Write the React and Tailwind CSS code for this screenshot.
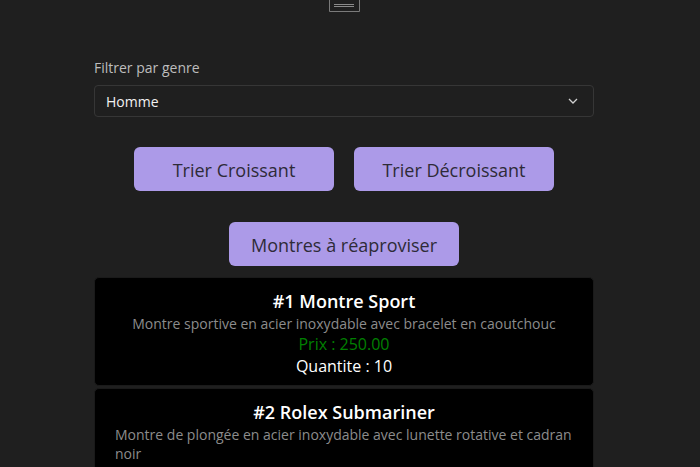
const montres = [
  {
    id: 1,
    nom: "Montre Sport",
    description: "Montre sportive en acier inoxydable avec bracelet en caoutchouc",
    prix: "250.00",
    quantite: 10,
  },
  {
    id: 2,
    nom: "Rolex Submariner",
    description:
      "Montre de plongée en acier inoxydable avec lunette rotative et cadran noir",
    prix: "8500.00",
    quantite: 3,
  },
];

const App = () => {
  return (
    <div
      className="min-h-[467px] bg-[#1f1f1f] text-white overflow-hidden"
      style={{ fontFamily: '"Open Sans", "Liberation Sans", sans-serif' }}
    >
      <div className="w-[688px] flex flex-col items-center">
        <svg width="31" height="12" viewBox="0 0 31 12" className="block">
          <path d="M0.5 0 V11.5 H30.5 V0" fill="none" stroke="#7a7a7a" strokeWidth="1" />
          <line x1="5" y1="4.5" x2="25" y2="4.5" stroke="#8a8a8a" strokeWidth="1" />
          <line x1="5" y1="6.5" x2="25" y2="6.5" stroke="#8a8a8a" strokeWidth="1" />
        </svg>

        <div className="w-[500px] mt-[46px]">
          <label className="block text-[14px] leading-[20px] text-[#bdbdbd]">
            Filtrer par genre
          </label>
          <div className="mt-[7px] h-[32px] rounded-[4px] border border-[#363636] flex items-center justify-between px-[11px]">
            <span className="text-[14px] text-[#f2f2f2]">Homme</span>
            <svg width="10" height="6" viewBox="0 0 10 6" className="mr-[4px]">
              <path d="M1 1 L5 5 L9 1" fill="none" stroke="#d0d0d0" strokeWidth="1.3" />
            </svg>
          </div>

          <div className="mt-[30px] flex justify-center gap-[20px]">
            <button className="w-[200px] h-[44px] pt-[2px] rounded-[6px] bg-[#ac9ae8] text-[18px] text-[#2e2b38]">
              Trier Croissant
            </button>
            <button className="w-[200px] h-[44px] pt-[2px] rounded-[6px] bg-[#ac9ae8] text-[18px] text-[#2e2b38]">
              Trier Décroissant
            </button>
          </div>

          <div className="mt-[31px] flex justify-center">
            <button className="w-[230px] h-[44px] pt-[2px] rounded-[6px] bg-[#ac9ae8] text-[18px] text-[#2e2b38]">
              Montres à réaproviser
            </button>
          </div>

          <div className="mt-[11px] flex flex-col gap-[2px]">
            {montres.map((m) => (
              <div
                key={m.id}
                className="bg-black border border-[#1a1a1a] rounded-[5px] px-[20px] pt-[10px] pb-[7px] flex flex-col items-center"
              >
                <h3 className="text-[18px] leading-[26px] font-semibold text-white">
                  #{m.id} {m.nom}
                </h3>
                <p className="text-[14px] leading-[19px] mb-[1px] text-[#8c8c8c]">
                  {m.description}
                </p>
                <p className="text-[16px] leading-[20px] text-[#008000]">
                  Prix : {m.prix}
                </p>
                <p className="text-[16px] leading-[24px] text-white">
                  Quantite : {m.quantite}
                </p>
              </div>
            ))}
          </div>
        </div>
      </div>
    </div>
  );
};

export default App;
